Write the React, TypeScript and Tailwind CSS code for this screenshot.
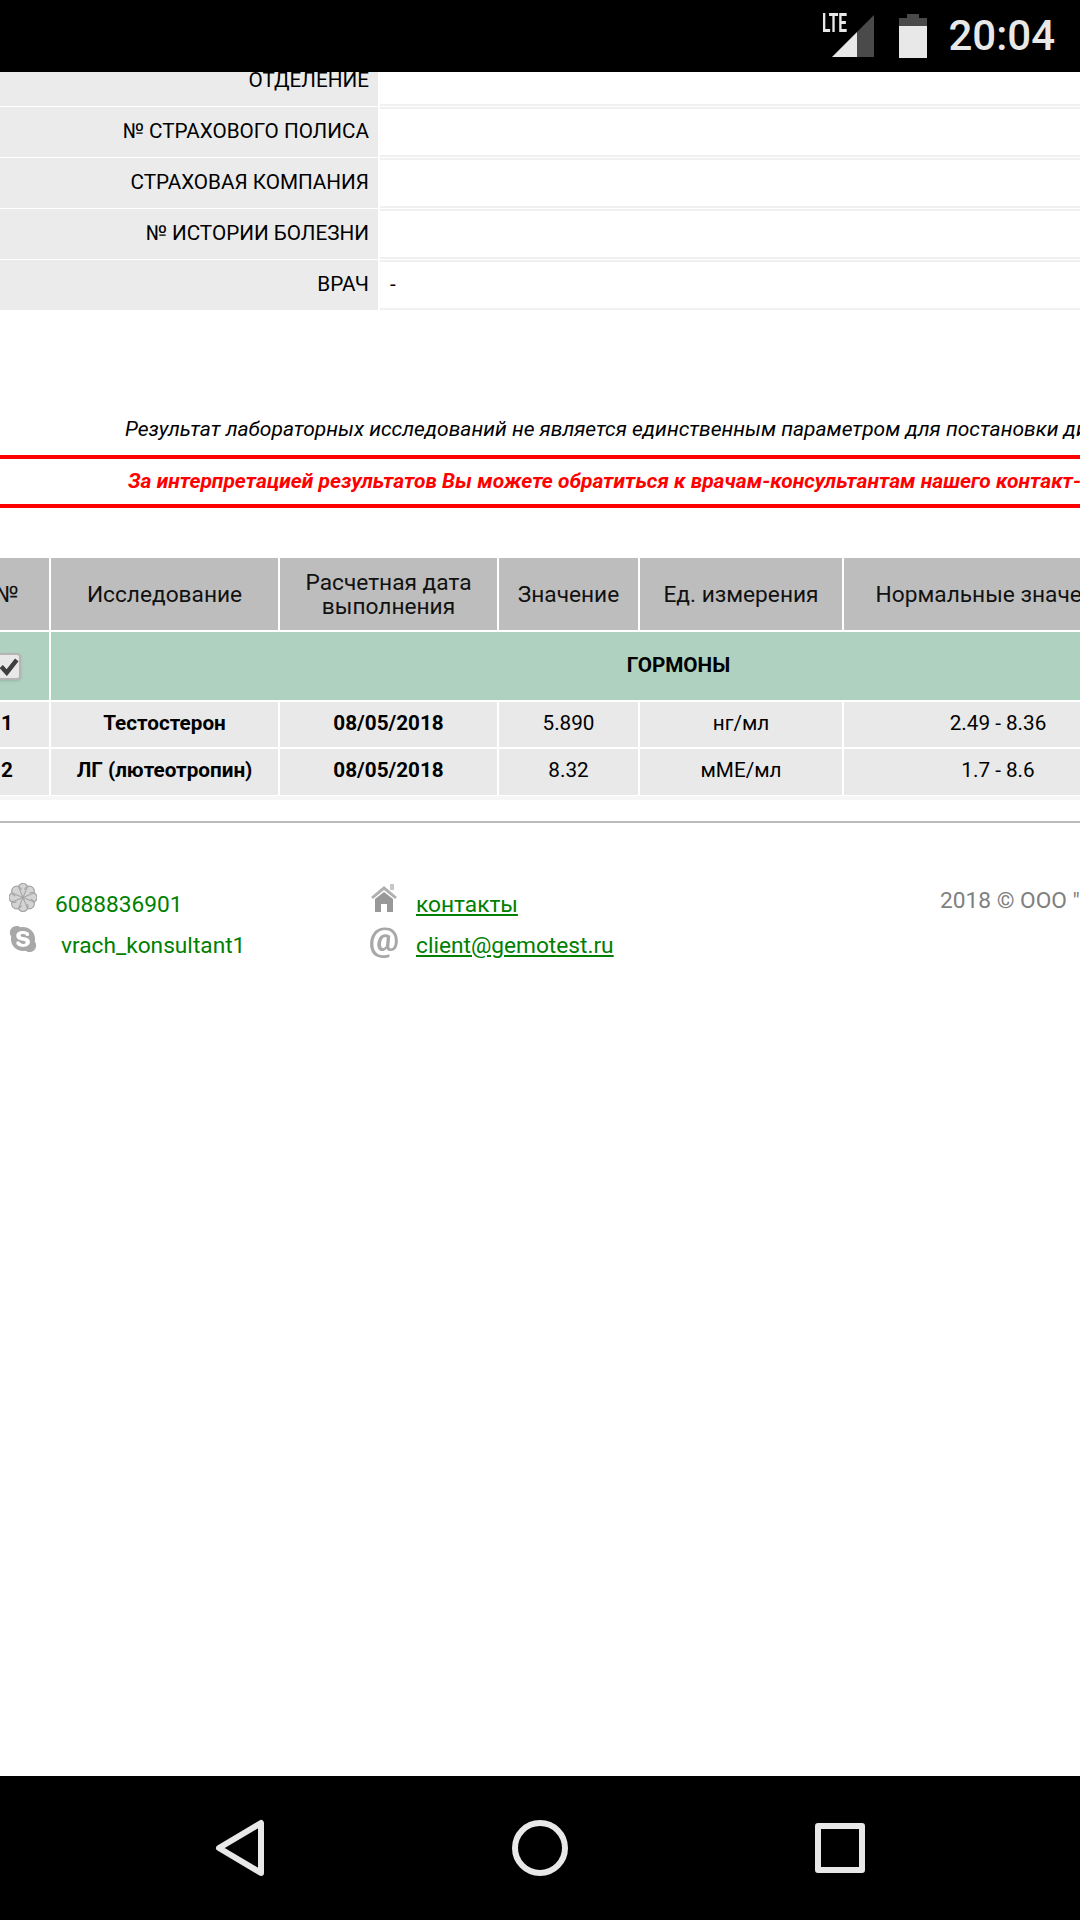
import React from "react";
import { FaSkype } from "react-icons/fa";

const rows: [string, string][] = [
  ["ОТДЕЛЕНИЕ", ""],
  ["№ СТРАХОВОГО ПОЛИСА", ""],
  ["СТРАХОВАЯ КОМПАНИЯ", ""],
  ["№ ИСТОРИИ БОЛЕЗНИ", ""],
  ["ВРАЧ", "-"],
];

function Flower() {
  const petals = [0, 45, 90, 135, 180, 225, 270, 315];
  return (
    <svg width="28" height="29" viewBox="0 0 28 29" className="blur-[0.4px]">
      {petals.map((a) => (
        <circle key={a} cx="14" cy="5.500" r="5" fill="#d4d4d4" stroke="#a4a4a4" strokeWidth="1.200" transform={`rotate(${a} 14 14.5)`} />
      ))}
      <circle cx="14" cy="14.500" r="8" fill="#d4d4d4" />
      {petals.map((a) => (
        <line key={a} x1="14" y1="14.500" x2="14" y2="2" stroke="#a4a4a4" strokeWidth="1" transform={`rotate(${a + 22.5} 14 14.5)`} />
      ))}
    </svg>
  );
}

function House() {
  return (
    <svg width="28" height="29" viewBox="0 0 28 29" className="blur-[0.6px]">
      <path d="M1 14 L14 3 L27 14 L25 16 L14 7 L3 16 Z" fill="#b0b0b0" />
      <rect x="20" y="1" width="4" height="6" fill="#c8c8c8" />
      <path d="M5 16 L14 9 L23 16 V29 H17 V21 H11 V29 H5 Z" fill="#989898" />
    </svg>
  );
}

function Check() {
  return (
    <svg width="20" height="20" viewBox="0 0 18 18">
      <path d="M2 9.500 L7 15 L16 3.500" fill="none" stroke="#3f3f3f" strokeWidth="4" />
    </svg>
  );
}

const cell = "bg-[#e9e9e9] flex items-center justify-center pb-[2px]";

export default function App() {
  return (
    <div className="w-[1080px] h-[1920px] flex flex-col overflow-hidden bg-white text-black font-['Roboto',sans-serif]">
      <header className="h-[72px] shrink-0 bg-black flex items-center justify-end pr-[25px] text-[#e8e8e8]">
        <div className="relative w-[52px] h-[72px] mr-[25px]">
          <span className="absolute left-0 top-[10px] text-[25px] leading-[28px] font-bold origin-left scale-x-[0.62]">LTE</span>
          <svg width="42" height="42" viewBox="0 0 42 42" className="absolute left-[10px] top-[15px]">
            <path d="M25 17 L42 0 V42 H25 Z" fill="#4a4a4a" />
            <path d="M0 42 L25 17 V42 Z" fill="#e8e8e8" />
          </svg>
        </div>
        <svg width="28" height="44" viewBox="0 0 28 44" className="mr-[21px]">
          <path d="M0 4 H8 V0 H20 V4 H28 V12 H0 Z" fill="#4a4a4a" />
          <rect x="0" y="12" width="28" height="32" fill="#e8e8e8" />
        </svg>
        <span className="text-[42px] leading-none font-medium">20:04</span>
      </header>

      <main className="flex-1 overflow-hidden">
        <div className="-mt-[16px] grid grid-cols-[378px_1fr] gap-y-px gap-x-[2px] text-[20.7px]">
          {rows.map(([label, value]) => (
            <React.Fragment key={label}>
              <div className="h-[50px] bg-[#ebebeb] flex items-center justify-end pr-[9px] pb-[1px]">{label}</div>
              <div className="h-[50px] border-y-2 border-[#f0f0f0] flex items-center pl-[10px] pb-[1px]">{value}</div>
            </React.Fragment>
          ))}
        </div>

        <div className="mt-[98px] h-[40px] pl-[125px] pt-[3px] flex items-center whitespace-nowrap italic text-[21px]">
          Результат лабораторных исследований не является единственным параметром для постановки диагноза
        </div>
        <div className="mt-[7px] h-[53px] border-y-[4px] border-[#ff0000] pl-[128px] flex items-center whitespace-nowrap italic font-bold text-[21px] text-[#ff0000]">
          За интерпретацией результатов Вы можете обратиться к врачам-консультантам нашего контакт-центра
        </div>

        <div className="mt-[50px] -ml-[35px] w-[1342px] grid grid-cols-[84px_227px_217px_139px_202px_308px_150px] grid-rows-[72px_68px_45px_46px] gap-[2px] text-[20.7px] text-center">
          {["№", "Исследование", "Расчетная дата выполнения", "Значение", "Ед. измерения", "Нормальные значения", ""].map((h) => (
            <div key={h} className="bg-[#bdbdbd] flex items-center justify-center px-[20px] pt-[1px] text-[22.700px] leading-[24px] text-[#111]">{h}</div>
          ))}
          <div className="bg-[#aed1c0] flex items-center justify-center">
            <span className="w-[25px] h-[27px] ml-[3px] rounded-[4px] bg-[#e8e8e8] border-2 border-[#b5b5b5] shadow-sm flex items-center justify-center">
              <Check />
            </span>
          </div>
          <div className="col-span-6 bg-[#aed1c0] flex items-center justify-center font-bold pb-[1px] pl-[2px]">ГОРМОНЫ</div>

          <div className={`${cell} font-bold`}>1</div>
          <div className={`${cell} font-bold`}>Тестостерон</div>
          <div className={`${cell} font-bold`}>08/05/2018</div>
          <div className={cell}>5.890</div>
          <div className={cell}>нг/мл</div>
          <div className={cell}>2.49 - 8.36</div>
          <div className={cell} />

          <div className={`${cell} font-bold`}>2</div>
          <div className={`${cell} font-bold`}>ЛГ (лютеотропин)</div>
          <div className={`${cell} font-bold`}>08/05/2018</div>
          <div className={cell}>8.32</div>
          <div className={cell}>мМЕ/мл</div>
          <div className={cell}>1.7 - 8.6</div>
          <div className={cell} />
        </div>
        <div className="h-[4px] mt-px bg-[#f6f6f6]" />
        <div className="h-[2px] mt-[21px] bg-[#bbbbbb]" />

        <footer className="pt-[60px] flex text-[22.700px] leading-[24px] text-[#008000]">
          <div className="w-[370px] pl-[9px]">
            <div className="h-[41px] flex">
              <Flower />
              <span className="ml-[18px] mt-[10px]">6088836901</span>
            </div>
            <div className="h-[41px] flex">
              <FaSkype className="w-[28px] h-[30px] text-[#a8a8a8] blur-[0.6px]" />
              <span className="ml-[24px] mt-[10px]">vrach_konsultant1</span>
            </div>
          </div>
          <div className="w-[570px]">
            <div className="h-[41px] flex">
              <House />
              <a className="ml-[18px] mt-[10px] underline">контакты</a>
            </div>
            <div className="h-[41px] flex">
              <span className="w-[28px] h-[30px] flex items-center justify-center text-[34px] font-bold text-[#a8a8a8] blur-[0.6px]">@</span>
              <a className="ml-[18px] mt-[10px] underline">client@gemotest.ru</a>
            </div>
          </div>
          <div className="mt-[6px] whitespace-nowrap text-[#808080]">2018 © ООО "</div>
        </footer>
      </main>

      <nav className="h-[144px] shrink-0 bg-black px-[90px] grid grid-cols-3 items-center justify-items-center">
        <svg width="50" height="58" viewBox="0 0 50 58" fill="none" stroke="#e8e8e8" strokeWidth="6" strokeLinejoin="round">
          <path d="M46 4 V54 L4 29 Z" />
        </svg>
        <svg width="56" height="56" viewBox="0 0 56 56" fill="none" stroke="#e8e8e8" strokeWidth="6">
          <circle cx="28" cy="28" r="25" />
        </svg>
        <svg width="50" height="50" viewBox="0 0 50 50" fill="none" stroke="#e8e8e8" strokeWidth="6" strokeLinejoin="round">
          <rect x="3" y="3" width="44" height="44" />
        </svg>
      </nav>
    </div>
  );
}
